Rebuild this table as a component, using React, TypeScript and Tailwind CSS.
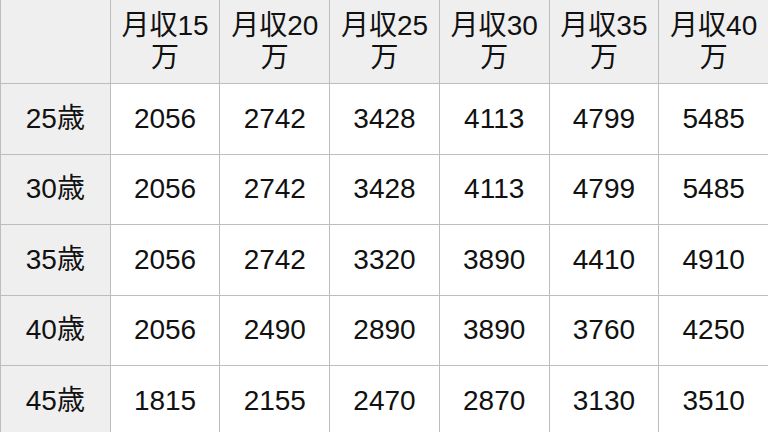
import React from "react";

const cols = ["15", "20", "25", "30", "35", "40"];
const rows: [string, string[]][] = [
  ["25歳", ["2056", "2742", "3428", "4113", "4799", "5485"]],
  ["30歳", ["2056", "2742", "3428", "4113", "4799", "5485"]],
  ["35歳", ["2056", "2742", "3320", "3890", "4410", "4910"]],
  ["40歳", ["2056", "2490", "2890", "3890", "3760", "4250"]],
  ["45歳", ["1815", "2155", "2470", "2870", "3130", "3510"]],
];

export default function App() {
  return (
    <div
      className="w-[768px] h-[432px] overflow-hidden bg-white text-[#111111]"
      style={{ fontFamily: '"Liberation Sans", "Noto Sans CJK JP", sans-serif' }}
    >
      <div className="grid grid-cols-7 text-[28px]">
        <div className="h-[84px] bg-[#efefef] border-l border-b border-[#bdbdbd]" />
        {cols.map((c) => (
          <div
            key={c}
            className="h-[84px] bg-[#efefef] border-l border-b border-[#bdbdbd] flex items-center justify-center text-center leading-[32px]"
          >
            <div>
              月収{c}
              <br />万
            </div>
          </div>
        ))}
        {rows.map(([age, vals]) => (
          <React.Fragment key={age}>
            <div className="h-[70.5px] bg-[#efefef] border-l border-b border-[#bdbdbd] flex items-center justify-center">
              {age}
            </div>
            {vals.map((v, i) => (
              <div
                key={i}
                className="h-[70.5px] bg-white border-l border-b border-[#bdbdbd] flex items-center justify-center"
              >
                {v}
              </div>
            ))}
          </React.Fragment>
        ))}
      </div>
    </div>
  );
}
